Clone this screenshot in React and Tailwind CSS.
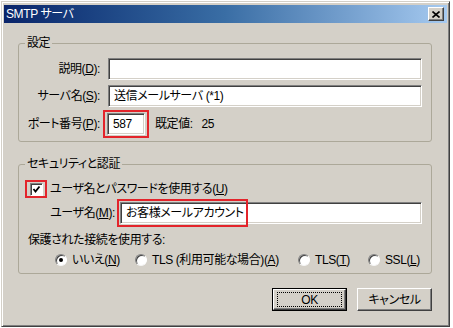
import React from 'react';

const FONT = "font-['Liberation_Sans','Noto_Sans_CJK_JP',sans-serif] [font-feature-settings:'palt'] tracking-[-0.4px]";
const RED = 'border-[#e3242b]';

function U({ children }) {
  return <span className="underline underline-offset-[1px]">{children}</span>;
}

function Field({ className = '', children }) {
  return (
    <div
      className={`h-[22px] bg-white border border-t-[#808080] border-l-[#808080] border-r-white border-b-white shadow-[inset_1px_1px_0_#404040,inset_-1px_-1px_0_#d4d0c8] flex items-center pl-[5px] text-[12px] text-black ${className}`}
    >
      {children}
    </div>
  );
}

function Radio({ checked }) {
  return (
    <span className="w-[12px] h-[12px] shrink-0 rounded-full bg-white border border-t-[#808080] border-l-[#808080] border-r-white border-b-[#f4f4f4] shadow-[inset_1px_1px_0_#404040] flex items-center justify-center">
      {checked && <span className="w-[4px] h-[4px] rounded-full bg-black" />}
    </span>
  );
}

function RadioItem({ checked, width, children }) {
  return (
    <div className={`flex items-center ${width}`}>
      <Radio checked={checked} />
      <span className="ml-[5px] whitespace-nowrap">{children}</span>
    </div>
  );
}

function Button({ children, isDefault }) {
  const face = (
    <div className="w-full h-full bg-[#d4d0c8] border border-t-white border-l-white border-r-[#404040] border-b-[#404040] shadow-[inset_-1px_-1px_0_#808080] flex items-center justify-center text-[12px]">
      {isDefault ? (
        <span className="w-[65px] h-[15px] border border-dotted border-black flex items-center justify-center">{children}</span>
      ) : (
        children
      )}
    </div>
  );
  if (isDefault) {
    return <div className="w-[75px] h-[23px] border border-black">{face}</div>;
  }
  return <div className="w-[75px] h-[23px]">{face}</div>;
}

export default function App() {
  return (
    <div className={`w-[453px] h-[328px] bg-white overflow-hidden text-black ${FONT}`}>
      <div className="mt-[1px] ml-[1px] w-[449px] h-[326px] bg-[#d4d0c8] border border-t-[#d4d0c8] border-l-[#d4d0c8] border-r-[#404040] border-b-[#404040] shadow-[inset_1px_1px_0_#ffffff,inset_-1px_-1px_0_#808080] pt-[3px] pl-[2px] pr-[2px] flex flex-col">
        {/* title bar */}
        <div className="h-[18px] bg-gradient-to-r from-[#0a246a] via-[#3a6ea5] to-[#a6caf0] flex items-center justify-between">
          <span className="pl-[2px] text-white text-[12px] leading-none">SMTP サーバ</span>
          <div className="mr-[3px] w-[16px] h-[14px] bg-[#d4d0c8] border border-t-white border-l-white border-r-[#404040] border-b-[#404040] shadow-[inset_-1px_-1px_0_#808080] flex items-center justify-center">
            <svg width="8" height="7" viewBox="0 0 8 7">
              <path d="M0.5 0.5 L7.5 6.5 M7.5 0.5 L0.5 6.5" stroke="#000" strokeWidth="1.6" fill="none" />
            </svg>
          </div>
        </div>

        {/* 設定 */}
        <fieldset className="mt-[12px] ml-[14px] w-[414px] border border-[#aca899] rounded-[3px] px-0 pb-[3px] text-[12px]">
          <legend className="ml-[6px] px-[2px] leading-[16px]">設定</legend>
          <div className="mt-[7px] flex items-center">
            <span className="w-[81px] text-right whitespace-nowrap">
              説明(<U>D</U>):
            </span>
            <Field className="ml-[8px] w-[314px]" />
          </div>
          <div className="mt-[5px] flex items-center">
            <span className="w-[81px] text-right whitespace-nowrap">
              サーバ名(<U>S</U>):
            </span>
            <Field className="ml-[8px] w-[314px]">送信メールサーバ (*1)</Field>
          </div>
          <div className="mt-[3px] flex items-center">
            <span className="w-[81px] text-right whitespace-nowrap">
              ポート番号(<U>P</U>):
            </span>
            <div className={`ml-[3px] border-2 ${RED} px-[2px] py-[1px]`}>
              <Field className="w-[38px]">587</Field>
            </div>
            <span className="ml-[6px] whitespace-nowrap">
              既定値:&nbsp;&nbsp;&nbsp;25
            </span>
          </div>
        </fieldset>

        {/* セキュリティと認証 */}
        <fieldset className="mt-[14px] ml-[14px] w-[414px] border border-[#aca899] rounded-[3px] px-0 pb-[5px] text-[12px]">
          <legend className="ml-[6px] px-[2px] leading-[16px]">セキュリティと認証</legend>
          <div className="mt-[8px] flex items-center">
            <div className={`ml-[6px] h-[18px] w-[22px] border-2 ${RED} flex items-center justify-center`}>
              <span className="w-[13px] h-[13px] bg-white border border-t-[#808080] border-l-[#808080] border-r-white border-b-white shadow-[inset_1px_1px_0_#404040] flex items-center justify-center">
                <svg width="9" height="9" viewBox="0 0 9 9">
                  <path d="M1.5 4 L3.5 6.5 L7.5 1.5" stroke="#000" strokeWidth="1.8" fill="none" />
                </svg>
              </span>
            </div>
            <span className="ml-[3px] whitespace-nowrap">
              ユーザ名とパスワードを使用する(<U>U</U>)
            </span>
          </div>
          <div className="mt-[4px] flex items-center">
            <span className="w-[96px] text-right whitespace-nowrap">
              ユーザ名(<U>M</U>):
            </span>
            <div className="relative ml-[5px]">
              <Field className="w-[302px]">お客様メールアカウント</Field>
              <div className={`absolute -left-[3px] -top-[3px] w-[131px] h-[28px] border-2 ${RED}`} />
            </div>
          </div>
          <div className="mt-[8px] ml-[9px] leading-[16px] whitespace-nowrap">保護された接続を使用する:</div>
          <div className="mt-[4px] ml-[36px] h-[16px] flex items-center">
            <RadioItem checked width="w-[80px]">
              いいえ(<U>N</U>)
            </RadioItem>
            <RadioItem width="w-[163px]">
              TLS (利用可能な場合)(<U>A</U>)
            </RadioItem>
            <RadioItem width="w-[70px]">
              TLS(<U>T</U>)
            </RadioItem>
            <RadioItem width="w-[60px]">
              SSL(<U>L</U>)
            </RadioItem>
          </div>
        </fieldset>

        {/* buttons */}
        <div className="mt-[14px] mr-[15px] flex justify-end gap-[10px]">
          <Button isDefault>OK</Button>
          <Button>キャンセル</Button>
        </div>
      </div>
    </div>
  );
}
